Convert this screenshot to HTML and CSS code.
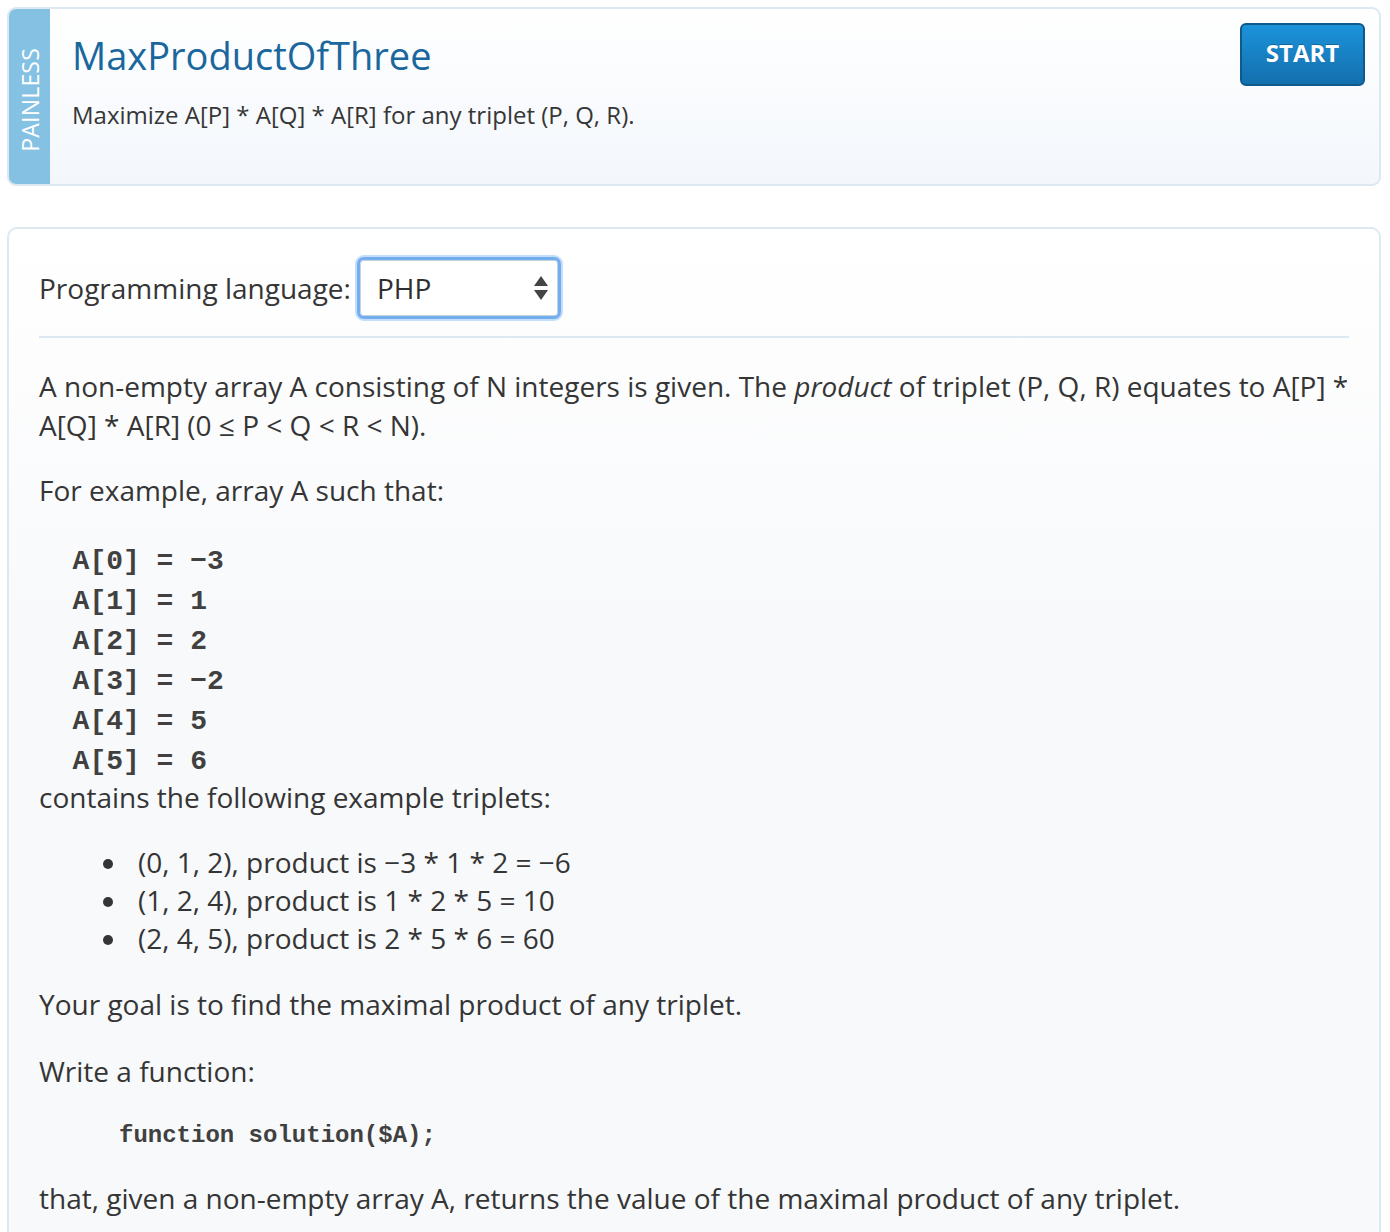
FILE: index.html
```html
<!DOCTYPE html>
<html>
<head>
<meta charset="utf-8">
<title>MaxProductOfThree</title>
<link rel="stylesheet" href="styles.css">
</head>
<body>
<div class="page">
  <section class="task-header">
    <div class="difficulty"><span>PAINLESS</span></div>
    <div class="task-info">
      <h1 class="task-title">MaxProductOfThree</h1>
      <p class="task-sub">Maximize A[P] * A[Q] * A[R] for any triplet (P, Q, R).</p>
    </div>
    <div class="task-action">
      <button class="start-btn">START</button>
    </div>
  </section>

  <section class="task-body">
    <div class="lang-row">
      <label class="lang-label">Programming language:</label>
      <div class="lang-select">
        <span class="lang-value">PHP</span>
        <span class="lang-arrows"><span class="arr-up"></span><span class="arr-down"></span></span>
      </div>
    </div>
    <hr class="divider">
    <div class="desc">
      <p>A non-empty array A consisting of N integers is given. The <em>product</em> of triplet (P, Q, R) equates to A[P] * A[Q] * A[R] (0 ≤ P &lt; Q &lt; R &lt; N).</p>
      <p>For example, array A such that:</p>
      <pre class="arr">  A[0] = −3
  A[1] = 1
  A[2] = 2
  A[3] = −2
  A[4] = 5
  A[5] = 6</pre>
      <div class="after-arr">contains the following example triplets:</div>
      <ul class="triplets">
        <li>(0, 1, 2), product is −3 * 1 * 2 = −6</li>
        <li>(1, 2, 4), product is 1 * 2 * 5 = 10</li>
        <li>(2, 4, 5), product is 2 * 5 * 6 = 60</li>
      </ul>
      <p class="goal">Your goal is to find the maximal product of any triplet.</p>
      <p>Write a function:</p>
      <pre class="sig">function solution($A);</pre>
      <p>that, given a non-empty array A, returns the value of the maximal product of any triplet.</p>
    </div>
  </section>
</div>
</body>
</html>
```

FILE: styles.css
```css
* { box-sizing: border-box; }
html, body { margin: 0; padding: 0; background: #fff; }
body {
  font-family: "Open Sans", "Noto Sans", sans-serif;
  color: #353535;
}
.page {
  padding: 7px 9px 0 7px;
}

/* header card */
.task-header {
  display: flex;
  height: 179px;
  border: 2px solid #dde8f0;
  border-radius: 9px;
  overflow: hidden;
  background: linear-gradient(#ffffff, #f3f7fc);
}
.difficulty {
  width: 41px;
  flex: none;
  background: #84c1e3;
  display: flex;
  align-items: center;
  justify-content: center;
  padding-top: 6px;
}
.difficulty span {
  writing-mode: vertical-rl;
  transform: rotate(180deg);
  color: #fff;
  font-size: 23px;
  letter-spacing: 0.2px;
}
.task-info {
  flex: 1;
  padding: 22px 0 0 22px;
}
.task-title {
  margin: 0;
  font-weight: 400;
  font-size: 38px;
  line-height: 48px;
  color: #1a679e;
}
.task-sub {
  margin: 20px 0 0;
  font-size: 24px;
  line-height: 32px;
  color: #363636;
}
.task-action {
  padding: 14px 14px 0 0;
}
.start-btn {
  width: 125px;
  height: 63px;
  border: 2px solid #0e5a8a;
  border-radius: 6px;
  background: linear-gradient(#1c93da, #136fae);
  color: #fff;
  font-family: "Open Sans", sans-serif;
  font-weight: 700;
  font-size: 24px;
  text-shadow: 0 -1px 0 rgba(0,0,0,0.25);
  padding: 0 0 4px;
}

/* task body card */
.task-body {
  margin-top: 41px;
  border: 2px solid #dde8f0;
  border-bottom: none;
  border-radius: 10px 10px 0 0;
  background: linear-gradient(#ffffff 0px, #f8f9fb 400px, #f7f9fb);
  padding: 28px 30px 0 30px;
  min-height: 1010px;
}
.lang-row {
  display: flex;
  align-items: center;
  gap: 6px;
  padding-bottom: 17px;
}
.lang-label {
  font-size: 28px;
  line-height: 36px;
}
.lang-select {
  width: 204px;
  height: 62px;
  border: 3px solid #72adf0;
  border-radius: 7px;
  box-shadow: 0 0 0 2px #c4ddf9, inset 0 0 0 1px #c9d3dd;
  background: #fff;
  display: flex;
  align-items: center;
  justify-content: space-between;
  padding: 0 10px 0 17px;
}
.lang-value {
  font-size: 28px;
  color: #2f2f2f;
}
.lang-arrows {
  display: flex;
  flex-direction: column;
  gap: 4px;
}
.arr-up, .arr-down {
  width: 0; height: 0;
  border-left: 7px solid transparent;
  border-right: 7px solid transparent;
}
.arr-up { border-bottom: 10px solid #444; }
.arr-down { border-top: 10px solid #444; }

.divider {
  margin: 0;
  border: none;
  border-top: 2px solid #dde8f0;
}

.desc {
  padding-top: 29px;
  font-size: 28px;
  line-height: 39px;
}
.desc p { margin: 0 0 26px; }
.desc p.goal { margin-bottom: 28px; }
.desc em { font-style: italic; }
.arr {
  margin: 0 0 -4px;
  padding-top: 6px;
  font-family: "Liberation Mono", "Courier New", monospace;
  font-weight: 700;
  font-size: 28px;
  line-height: 40px;
  color: #404040;
  white-space: pre;
}
.after-arr { margin: 0; }
.triplets {
  list-style: none;
  margin: 26px 0 28px;
  padding-left: 99px;
}
.triplets li { line-height: 38px; }
.triplets li::before {
  content: "";
  display: inline-block;
  width: 10px;
  height: 10px;
  border-radius: 50%;
  background: #353535;
  margin-left: -35px;
  margin-right: 25px;
  vertical-align: middle;
  position: relative;
  top: -2px;
}
.sig {
  margin: 0 0 25px;
  padding-left: 80px;
  padding-top: 1px;
  font-family: "Liberation Mono", "Courier New", monospace;
  font-weight: 700;
  font-size: 24px;
  line-height: 36px;
  color: #404040;
}
```
